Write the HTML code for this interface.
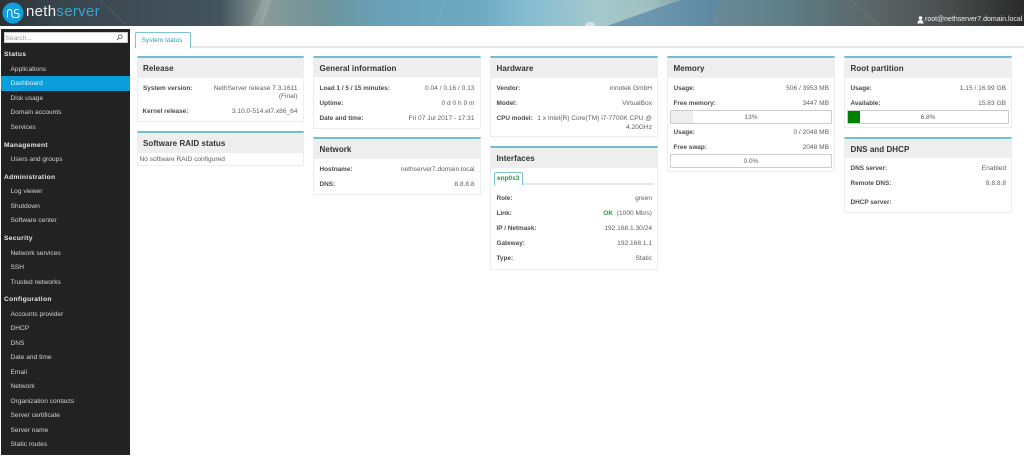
<!DOCTYPE html>
<html><head><meta charset="utf-8"><style>
html,body{margin:0;padding:0;width:1024px;height:465px;overflow:hidden;background:#fff;font-family:"Liberation Sans",sans-serif;font-size:6.6px;color:#555}
div,span{position:absolute;box-sizing:border-box}
#t{left:0;top:0;width:1024px;height:465px;filter:blur(.3px)}
.h{left:0;top:0;width:1024px;height:25.5px;background:linear-gradient(90deg,#2c3134 0,#39454d 60px,#44545e 220px,#8a9a98 265px,#6f9499 320px,#68a0b8 380px,#6fa9c2 480px,#86bdd2 530px,#a5c8cc 600px,#a0bfc0 650px,#6a8a98 710px,#5f7f88 780px,#5a6465 880px,#4a4c4c 950px,#2a2a2a 1024px);overflow:hidden}
.s{left:1px;top:29px;width:129px;height:425.5px;background:#222}
.m{left:10.5px;color:#d2d2d2;white-space:nowrap;line-height:10px;height:10px;margin-top:1.1px}
.g{left:4px;color:#e6e6e6;font-weight:bold;font-size:6.7px;letter-spacing:.3px;white-space:nowrap;line-height:10px;height:10px;margin-top:1px}
.p{background:#fff;border:1px solid #eee;border-top:2px solid #6fbfd0}
.b{left:0;top:0;right:0;background:#eee;color:#333;font-weight:bold;font-size:8px;letter-spacing:.05px;padding-left:5.5px;line-height:22px}
.l,.v{line-height:10px;height:10px;white-space:nowrap;margin-top:1.2px}
.l{font-weight:bold;color:#4c4c4c;font-size:6.4px}
.v{color:#5f5f5f;text-align:right;font-size:6.6px}
.bar{border:1px solid #ccc;border-radius:1px;height:14px}
.bt{text-align:center;line-height:16px;height:14px;color:#5f5f5f;font-size:6.5px}
</style></head><body><div id="t">
<div class="h">
<svg width="1024" height="26" style="position:absolute;left:0;top:0">
<polygon points="607,26 680,0 720,0 712,26" fill="#5c8aa8" opacity=".75"/>
<polygon points="262,0 272,0 262,26 250,26" fill="#b8bfbc" opacity=".25"/>
<path d="M100 0l25 24M268 0l-7 26M445 0l-8 26M620 0l-30 26M560 0l35 26M680 0l-90 26M850 0l30 26" stroke="#d5e4e4" stroke-width=".4" opacity=".35" fill="none"/>
<ellipse cx="590" cy="25" rx="5" ry="3" fill="#e8f0ee" opacity=".7"/>
<circle cx="13" cy="13" r="10.500" fill="#0f9fdc"/>
<path d="M7.500 17.500v-5q0-3 2.200-3t2.200 3v2q0 3 2.300 3M19 9.500h-2.700q-1.800 0-1.800 2t1.800 2h.9q1.800 0 1.800 2t-1.800 2h-2.500" fill="none" stroke="#fff" stroke-width="1"/>
</svg>
<span style="left:26px;top:2px;font-size:15px;line-height:20px;letter-spacing:.3px;color:#f2f4f5;white-space:nowrap">neth<span style="position:static;color:#35a5d0">server</span></span>
<svg width="7" height="8" style="position:absolute;left:917px;top:16px"><circle cx="3.500" cy="2" r="1.800" fill="#fff"/><path d="M.5 7.500q0-3.500 3-3.500t3 3.500z" fill="#fff"/></svg>
<span style="left:925px;top:15px;line-height:10px;color:#f0f0f0;font-size:7px;white-space:nowrap">root@nethserver7.domain.local</span>
</div>

<div class="s"></div>
<div style="left:4px;top:32px;width:124px;height:11px;background:#fff;border:1px solid #ccc"></div>
<span style="left:5.500px;top:33.500px;line-height:10px;color:#999;white-space:nowrap">Search...</span>
<svg width="7" height="7" style="position:absolute;left:116px;top:34px"><circle cx="4.300" cy="2.700" r="1.900" fill="none" stroke="#666" stroke-width=".8"/><path d="M3 4L.8 6.200" stroke="#666" stroke-width="1"/></svg>
<div style="left:1px;top:75.500px;width:129px;height:15px;background:#0a9fdb"></div>

<span class="g" style="top:49px">Status</span>
<span class="m" style="top:63.500px">Applications</span>
<span class="m" style="top:78px;color:#e8f4fa">Dashboard</span>
<span class="m" style="top:92.500px">Disk usage</span>
<span class="m" style="top:107px">Domain accounts</span>
<span class="m" style="top:121.500px">Services</span>
<span class="g" style="top:139.500px">Management</span>
<span class="m" style="top:154px">Users and groups</span>
<span class="g" style="top:171.500px">Administration</span>
<span class="m" style="top:186px">Log viewer</span>
<span class="m" style="top:200.500px">Shutdown</span>
<span class="m" style="top:215px">Software center</span>
<span class="g" style="top:233px">Security</span>
<span class="m" style="top:247.500px">Network services</span>
<span class="m" style="top:262px">SSH</span>
<span class="m" style="top:276.500px">Trusted networks</span>
<span class="g" style="top:294px">Configuration</span>
<span class="m" style="top:308.500px">Accounts provider</span>
<span class="m" style="top:323px">DHCP</span>
<span class="m" style="top:337.500px">DNS</span>
<span class="m" style="top:352px">Date and time</span>
<span class="m" style="top:366.500px">Email</span>
<span class="m" style="top:381px">Network</span>
<span class="m" style="top:395.500px">Organization contacts</span>
<span class="m" style="top:410px">Server certificate</span>
<span class="m" style="top:424.500px">Server name</span>
<span class="m" style="top:439px">Static routes</span>

<div style="left:134px;top:46px;width:890px;height:2px;background:#e6e6e6"></div>
<div style="left:134.500px;top:31.500px;width:56px;height:16px;background:#fff;border:1px solid #7cc4d4;border-bottom:0;border-radius:2px 2px 0 0"></div>
<span style="left:141.500px;top:35.500px;line-height:10px;color:#3d97ad;font-size:6.500px;white-space:nowrap">System status</span>

<div class="p" style="left:136.500px;top:56px;width:167.500px;height:65.500px"><div class="b" style="height:20px">Release</div></div>
<span class="l" style="left:143px;top:82.500px">System version:</span>
<span class="v" style="left:190px;width:107.500px;top:82.500px">NethServer release 7.3.1611</span>
<span class="v" style="left:190px;width:107.500px;top:91px">(Final)</span>
<span class="l" style="left:142.500px;top:106px">Kernel release:</span>
<span class="v" style="left:190px;width:107.500px;top:106px">3.10.0-514.el7.x86_64</span>

<div class="p" style="left:136.500px;top:131px;width:167.500px;height:34.500px"><div class="b" style="height:20px">Software RAID status</div></div>
<span style="left:139.500px;top:155.200px;line-height:10px;color:#5f5f5f;white-space:nowrap">No software RAID configured</span>

<div class="p" style="left:313px;top:56px;width:168px;height:72.500px"><div class="b" style="height:19px">General information</div></div>
<span class="l" style="left:319.500px;top:82.500px">Load 1 / 5 / 15 minutes:</span>
<span class="v" style="left:380px;width:94.500px;top:82.500px">0.04 / 0.16 / 0.13</span>
<span class="l" style="left:319.500px;top:97.500px">Uptime:</span>
<span class="v" style="left:380px;width:94.500px;top:97.500px">0 d 0 h 9 m</span>
<span class="l" style="left:319.500px;top:112.500px">Date and time:</span>
<span class="v" style="left:380px;width:94.500px;top:112.500px">Fri 07 Jul 2017 - 17:31</span>

<div class="p" style="left:313px;top:137px;width:168px;height:57.500px"><div class="b" style="height:19.500px">Network</div></div>
<span class="l" style="left:319.500px;top:163.500px">Hostname:</span>
<span class="v" style="left:380px;width:94.500px;top:163.500px">nethserver7.domain.local</span>
<span class="l" style="left:319.500px;top:178.500px">DNS:</span>
<span class="v" style="left:380px;width:94.500px;top:178.500px">8.8.8.8</span>

<div class="p" style="left:490px;top:56px;width:168px;height:81px"><div class="b" style="height:19.500px">Hardware</div></div>
<span class="l" style="left:496.500px;top:82.500px">Vendor:</span>
<span class="v" style="left:550px;width:102px;top:82.500px">innotek GmbH</span>
<span class="l" style="left:496.500px;top:97.500px">Model:</span>
<span class="v" style="left:550px;width:102px;top:97.500px">VirtualBox</span>
<span class="l" style="left:496.500px;top:112.500px">CPU model:</span>
<span class="v" style="left:530px;width:122px;top:112.500px">1 x Intel(R) Core(TM) i7-7700K CPU @</span>
<span class="v" style="left:550px;width:102px;top:121.500px">4.20GHz</span>

<div class="p" style="left:490px;top:146px;width:168px;height:123.500px"><div class="b" style="height:19.500px">Interfaces</div></div>
<div style="left:494px;top:183px;width:160px;height:1.500px;background:#e6e6e6"></div>
<div style="left:494px;top:172px;width:28.500px;height:12.500px;background:#fff;border:1px solid #7cc4d4;border-bottom:0;border-radius:2px 2px 0 0"></div>
<span style="left:497px;top:173.500px;line-height:10px;font-weight:bold;font-size:6.500px;color:#2e9440;white-space:nowrap">enp0s3</span>
<span class="l" style="left:496.500px;top:193px">Role:</span>
<span class="v" style="left:550px;width:102px;top:193px">green</span>
<span class="l" style="left:496.500px;top:208px">Link:</span>
<span class="v" style="left:550px;width:102px;top:208px"><b style="color:#2e9c3c">OK</b>&nbsp; (1000 Mb/s)</span>
<span class="l" style="left:496.500px;top:223px">IP / Netmask:</span>
<span class="v" style="left:550px;width:102px;top:223px">192.168.1.30/24</span>
<span class="l" style="left:496.500px;top:238px">Gateway:</span>
<span class="v" style="left:550px;width:102px;top:238px">192.168.1.1</span>
<span class="l" style="left:496.500px;top:253px">Type:</span>
<span class="v" style="left:550px;width:102px;top:253px">Static</span>

<div class="p" style="left:667px;top:56px;width:168px;height:115.500px"><div class="b" style="height:19.500px">Memory</div></div>
<span class="l" style="left:673.500px;top:82.500px">Usage:</span>
<span class="v" style="left:720px;width:109px;top:82.500px">506 / 3953 MB</span>
<span class="l" style="left:673.500px;top:97.500px">Free memory:</span>
<span class="v" style="left:720px;width:109px;top:97.500px">3447 MB</span>
<div class="bar" style="left:670px;top:110px;width:162px"><div style="left:0;top:0;width:22px;height:12px;background:#eee"></div></div>
<span class="bt" style="left:670px;top:110px;width:162px">13%</span>
<span class="l" style="left:673.500px;top:127px">Usage:</span>
<span class="v" style="left:720px;width:109px;top:127px">0 / 2048 MB</span>
<span class="l" style="left:673.500px;top:142px">Free swap:</span>
<span class="v" style="left:720px;width:109px;top:142px">2048 MB</span>
<div class="bar" style="left:670px;top:154px;width:162px"></div>
<span class="bt" style="left:670px;top:154px;width:162px">0.0%</span>

<div class="p" style="left:844px;top:56px;width:168px;height:72px"><div class="b" style="height:19.500px">Root partition</div></div>
<span class="l" style="left:850.500px;top:82.500px">Usage:</span>
<span class="v" style="left:900px;width:106px;top:82.500px">1.15 / 16.99 GB</span>
<span class="l" style="left:850.500px;top:97.500px">Available:</span>
<span class="v" style="left:900px;width:106px;top:97.500px">15.83 GB</span>
<div class="bar" style="left:847px;top:110px;width:162px"><div style="left:0;top:0;width:12px;height:12px;background:#008000"></div></div>
<span class="bt" style="left:847px;top:110px;width:162px">6.8%</span>

<div class="p" style="left:844px;top:137px;width:168px;height:75.500px"><div class="b" style="height:19px">DNS and DHCP</div></div>
<span class="l" style="left:850.500px;top:162.500px">DNS server:</span>
<span class="v" style="left:900px;width:106px;top:162.500px">Enabled</span>
<span class="l" style="left:850.500px;top:177.500px">Remote DNS:</span>
<span class="v" style="left:900px;width:106px;top:177.500px">8.8.8.8</span>
<span class="l" style="left:850.500px;top:197px">DHCP server:</span>
</div></body></html>
